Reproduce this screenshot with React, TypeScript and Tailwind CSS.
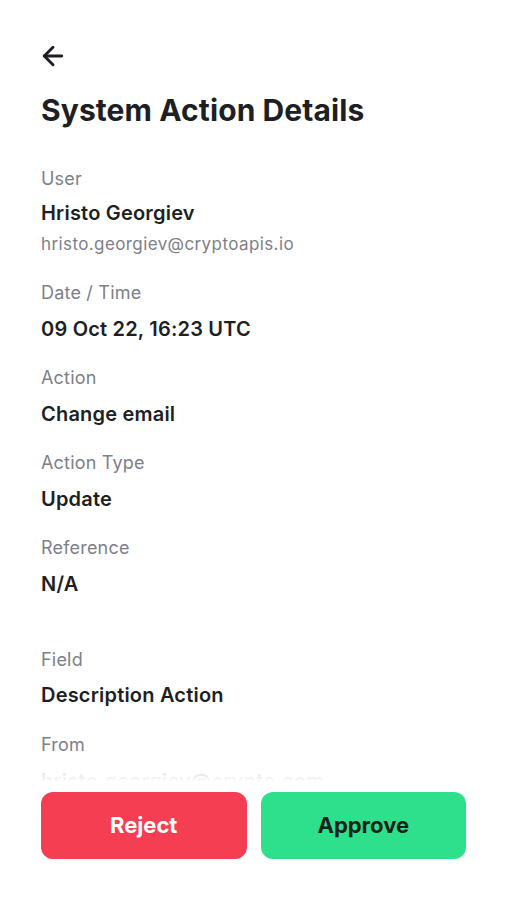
import React from 'react';
import { ArrowLeft } from 'lucide-react';

const font = { fontFamily: 'Inter, "Noto Sans", sans-serif' };

const Field: React.FC<{ label: string; value: string; className?: string; sub?: string; valueClass?: string }> = ({
  label,
  value,
  className,
  sub,
  valueClass = 'mt-[12px]',
}) => (
  <div className={className}>
    <div className="text-[18px] leading-[24px] tracking-[0.2px] text-[#7d808a]">{label}</div>
    <div className={`${valueClass} text-[20px] leading-[24px] font-semibold tracking-[0.2px] text-[#1d1f24]`}>{value}</div>
    {sub && <div className="mt-[8px] text-[17px] leading-[22px] tracking-[0.4px] text-[#7d808a]">{sub}</div>}
  </div>
);

export default function App() {
  return (
    <div className="relative w-full h-[900px] overflow-hidden bg-white" style={font}>
      <div className="px-[41px]">
        <button className="mt-[41px] block h-7 w-7 text-[#1d1f24]">
          <ArrowLeft size={30} strokeWidth={2.3} className="-ml-[3px]" />
        </button>
        <h1 className="mt-[24px] text-[30px] leading-[34px] font-bold text-[#1d1f24] tracking-[0.1px]">
          System Action Details
        </h1>
        <Field className="mt-[40px]" valueClass="mt-[10px]" label="User" value="Hristo Georgiev" sub="hristo.georgiev@cryptoapis.io" />
        <Field className="mt-[26px]" label="Date / Time" value="09 Oct 22, 16:23 UTC" />
        <Field className="mt-[25px]" label="Action" value="Change email" />
        <Field className="mt-[25px]" label="Action Type" value="Update" />
        <Field className="mt-[25px]" label="Reference" value="N/A" />
        <Field className="mt-[52px]" valueClass="mt-[11px]" label="Field" value="Description Action" />
        <Field className="mt-[26px]" label="From" value="hristo.georgiev@crypto.com" />
      </div>

      <div className="absolute inset-x-0 bottom-0">
        <div className="h-[22px] bg-gradient-to-b from-white/70 to-white" />
        <div className="bg-white px-[41px] pt-[10px] pb-[41px] flex gap-[14px]">
          <button className="flex-1 h-[67px] rounded-[12px] bg-[#f63e53] text-white text-[22px] font-bold">
            Reject
          </button>
          <button className="flex-1 h-[67px] rounded-[12px] bg-[#2ee08b] text-[#14201a] text-[22px] font-bold">
            Approve
          </button>
        </div>
      </div>
    </div>
  );
}
